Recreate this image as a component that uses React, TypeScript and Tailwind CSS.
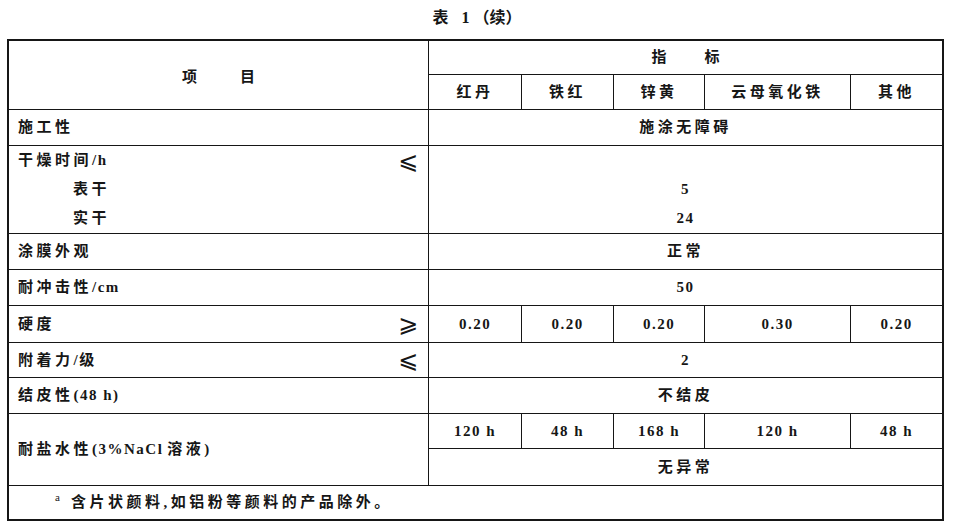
const font = "font-['Liberation_Serif','Noto_Sans_CJK_SC',serif]";

function Latin({ children }: { children: React.ReactNode }) {
  return <span className="tracking-[1.5px]">{children}</span>;
}

function Label({ text, latin, sign }: { text: string; latin?: string; sign?: string }) {
  return (
    <div className="flex items-center justify-between bg-white pl-[9px] pr-[10px]">
      <span className="tracking-[3.5px]">
        {text}
        {latin && <Latin>{latin}</Latin>}
      </span>
      {sign && <Sign value={sign} />}
    </div>
  );
}

function Sign({ value }: { value: string }) {
  return (
    <span className="font-['DejaVu_Sans',sans-serif] text-[24px] font-normal leading-none">{value}</span>
  );
}

function Cell({ children, span = "" }: { children: React.ReactNode; span?: string }) {
  return (
    <div className={`flex items-center justify-center bg-white tracking-[3.5px] ${span}`}>{children}</div>
  );
}

function Num({ children, span = "" }: { children: React.ReactNode; span?: string }) {
  return (
    <div className={`flex items-center justify-center bg-white tracking-[1.5px] ${span}`}>{children}</div>
  );
}

export default function App() {
  return (
    <div className={`h-[529px] w-[954px] bg-white text-[15px] font-semibold text-[#161616] ${font}`}>
      <div className="flex h-[39px] items-center justify-center pb-[3px] text-[16px] font-bold">
        <span>表</span>
        <span className="ml-[13px]">1</span>
        <span className="ml-[4px]">（续）</span>
      </div>

      <div className="ml-[7px] w-fit border-2 border-[#161616]">
        <div className="grid grid-cols-[419px_92px_91px_90px_145px_91px] grid-rows-[33px_34px_35px_87px_35px_35px_36px_34px_35px_34px_36px_33px] gap-px bg-[#161616]">
          <div className="row-span-2 flex items-center justify-center gap-[43px] bg-white pt-[4px]">
            <span>项</span>
            <span>目</span>
          </div>
          <div className="col-span-5 flex items-center justify-center gap-[38px] bg-white">
            <span>指</span>
            <span>标</span>
          </div>
          <Cell>红丹</Cell>
          <Cell>铁红</Cell>
          <Cell>锌黄</Cell>
          <Cell>云母氧化铁</Cell>
          <Cell>其他</Cell>

          <Label text="施工性" />
          <Cell span="col-span-5">施涂无障碍</Cell>

          <div className="flex flex-col bg-white pl-[9px] pr-[10px] leading-[29px]">
            <div className="flex items-center justify-between">
              <span className="tracking-[3.5px]">
                干燥时间<Latin>/h</Latin>
              </span>
              <Sign value="⩽" />
            </div>
            <span className="ml-[55px] tracking-[3.5px]">表干</span>
            <span className="ml-[55px] tracking-[3.5px]">实干</span>
          </div>
          <div className="col-span-5 flex flex-col items-center bg-white leading-[29px] tracking-[1.5px]">
            <span>&nbsp;</span>
            <span>5</span>
            <span>24</span>
          </div>

          <Label text="涂膜外观" />
          <Cell span="col-span-5">正常</Cell>

          <Label text="耐冲击性" latin="/cm" />
          <Num span="col-span-5">50</Num>

          <Label text="硬度" sign="⩾" />
          <Num>0.20</Num>
          <Num>0.20</Num>
          <Num>0.20</Num>
          <Num>0.30</Num>
          <Num>0.20</Num>

          <Label text="附着力" latin="/级" sign="⩽" />
          <Num span="col-span-5">2</Num>

          <Label text="结皮性" latin="(48 h)" />
          <Cell span="col-span-5">不结皮</Cell>

          <div className="row-span-2 flex items-center bg-white pl-[9px]">
            <span className="tracking-[3.5px]">耐盐水性</span>
            <Latin>(3%NaCl</Latin>
            <span className="ml-[4px] tracking-[3.5px]">溶液</span>
            <span>)</span>
          </div>
          <Num>120 h</Num>
          <Num>48 h</Num>
          <Num>168 h</Num>
          <Num>120 h</Num>
          <Num>48 h</Num>
          <Cell span="col-span-5">无异常</Cell>

          <div className="col-span-6 flex items-center bg-white pl-[46px]">
            <sup className="mr-[11px] text-[11px] font-normal">a</sup>
            <span className="tracking-[3.5px]">含片状颜料,如铝粉等颜料的产品除外。</span>
          </div>
        </div>
      </div>
    </div>
  );
}
